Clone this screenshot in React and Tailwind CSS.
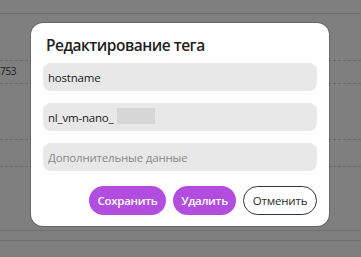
import { useState } from 'react';

const App = () => {
  const [key, setKey] = useState('hostname');
  const [value, setValue] = useState('nl_vm-nano_');
  const [extra, setExtra] = useState('');

  return (
    <div className="relative w-[361px] h-[257px] overflow-hidden bg-[#7f7f7f] font-['Open_Sans',sans-serif]">
      {/* Page behind the overlay */}
      <div className="flex flex-col">
        <div className="h-[14px] border-b border-[#6f6f6f]" />
        <div className="h-[47px] border-b border-dashed border-[#6a6a6a]" />
        <div className="h-[23px] border-b border-dashed border-[#6a6a6a] flex items-center">
          <span className="text-[10px] leading-[10px] text-[#1c1c1c] tracking-[-0.3px] -mt-[3px]">753</span>
        </div>
        <div className="h-[56px] border-b border-dashed border-[#6a6a6a]" />
        <div className="h-[27px] border-b border-dashed border-[#6a6a6a]" />
        <div className="h-[64px] border-b border-[#6f6f6f]" />
        <div className="h-[10px] border-b border-[#6f6f6f]" />
      </div>

      {/* Modal */}
      <div className="absolute left-[31px] top-[23px] w-[298px] bg-white rounded-[12px] shadow-[0_0_0_1px_rgba(60,60,60,0.35)] px-3 pt-[12px] pb-[11px]">
        <h2 className="text-[15.5px] tracking-[-0.5px] font-semibold text-[#1f1f1f] leading-[20px] pl-[3px] mb-[8px]">Редактирование тега</h2>
        <div className="flex flex-col gap-3">
          <input
            value={key}
            onChange={(e) => setKey(e.target.value)}
            className="w-full h-[28px] rounded-[8px] bg-[#e8e8e8] px-[5px] text-[11.5px] tracking-[-0.2px] text-[#222] outline-none"
          />
          <div className="relative">
            <input
              value={value}
              onChange={(e) => setValue(e.target.value)}
              className="w-full h-[28px] rounded-[8px] bg-[#e8e8e8] px-[5px] text-[11.5px] tracking-[-0.2px] text-[#222] outline-none"
            />
            <div className="absolute left-[74px] top-[5px] w-[38px] h-[16px] bg-[#d6d6d6]" />
          </div>
          <input
            value={extra}
            onChange={(e) => setExtra(e.target.value)}
            placeholder="Дополнительные данные"
            className="w-full h-[28px] rounded-[8px] bg-[#e8e8e8] px-[5px] text-[11.5px] tracking-[-0.2px] text-[#222] placeholder:text-[#8a8a8a] outline-none"
          />
        </div>
        <div className="flex justify-end gap-[7px] mt-[15px]">
          <button className="h-[29px] w-[77px] rounded-full bg-[#b24de0] text-white text-[11.5px] tracking-[-0.3px] font-semibold">Сохранить</button>
          <button className="h-[29px] w-[63px] rounded-full bg-[#b24de0] text-white text-[11.5px] tracking-[-0.3px] font-semibold">Удалить</button>
          <button className="h-[29px] w-[74px] rounded-full border border-[#2e3440] bg-white text-[#2a2a2a] text-[11.5px] tracking-[-0.2px]">Отменить</button>
        </div>
      </div>
    </div>
  );
};

export default App;
